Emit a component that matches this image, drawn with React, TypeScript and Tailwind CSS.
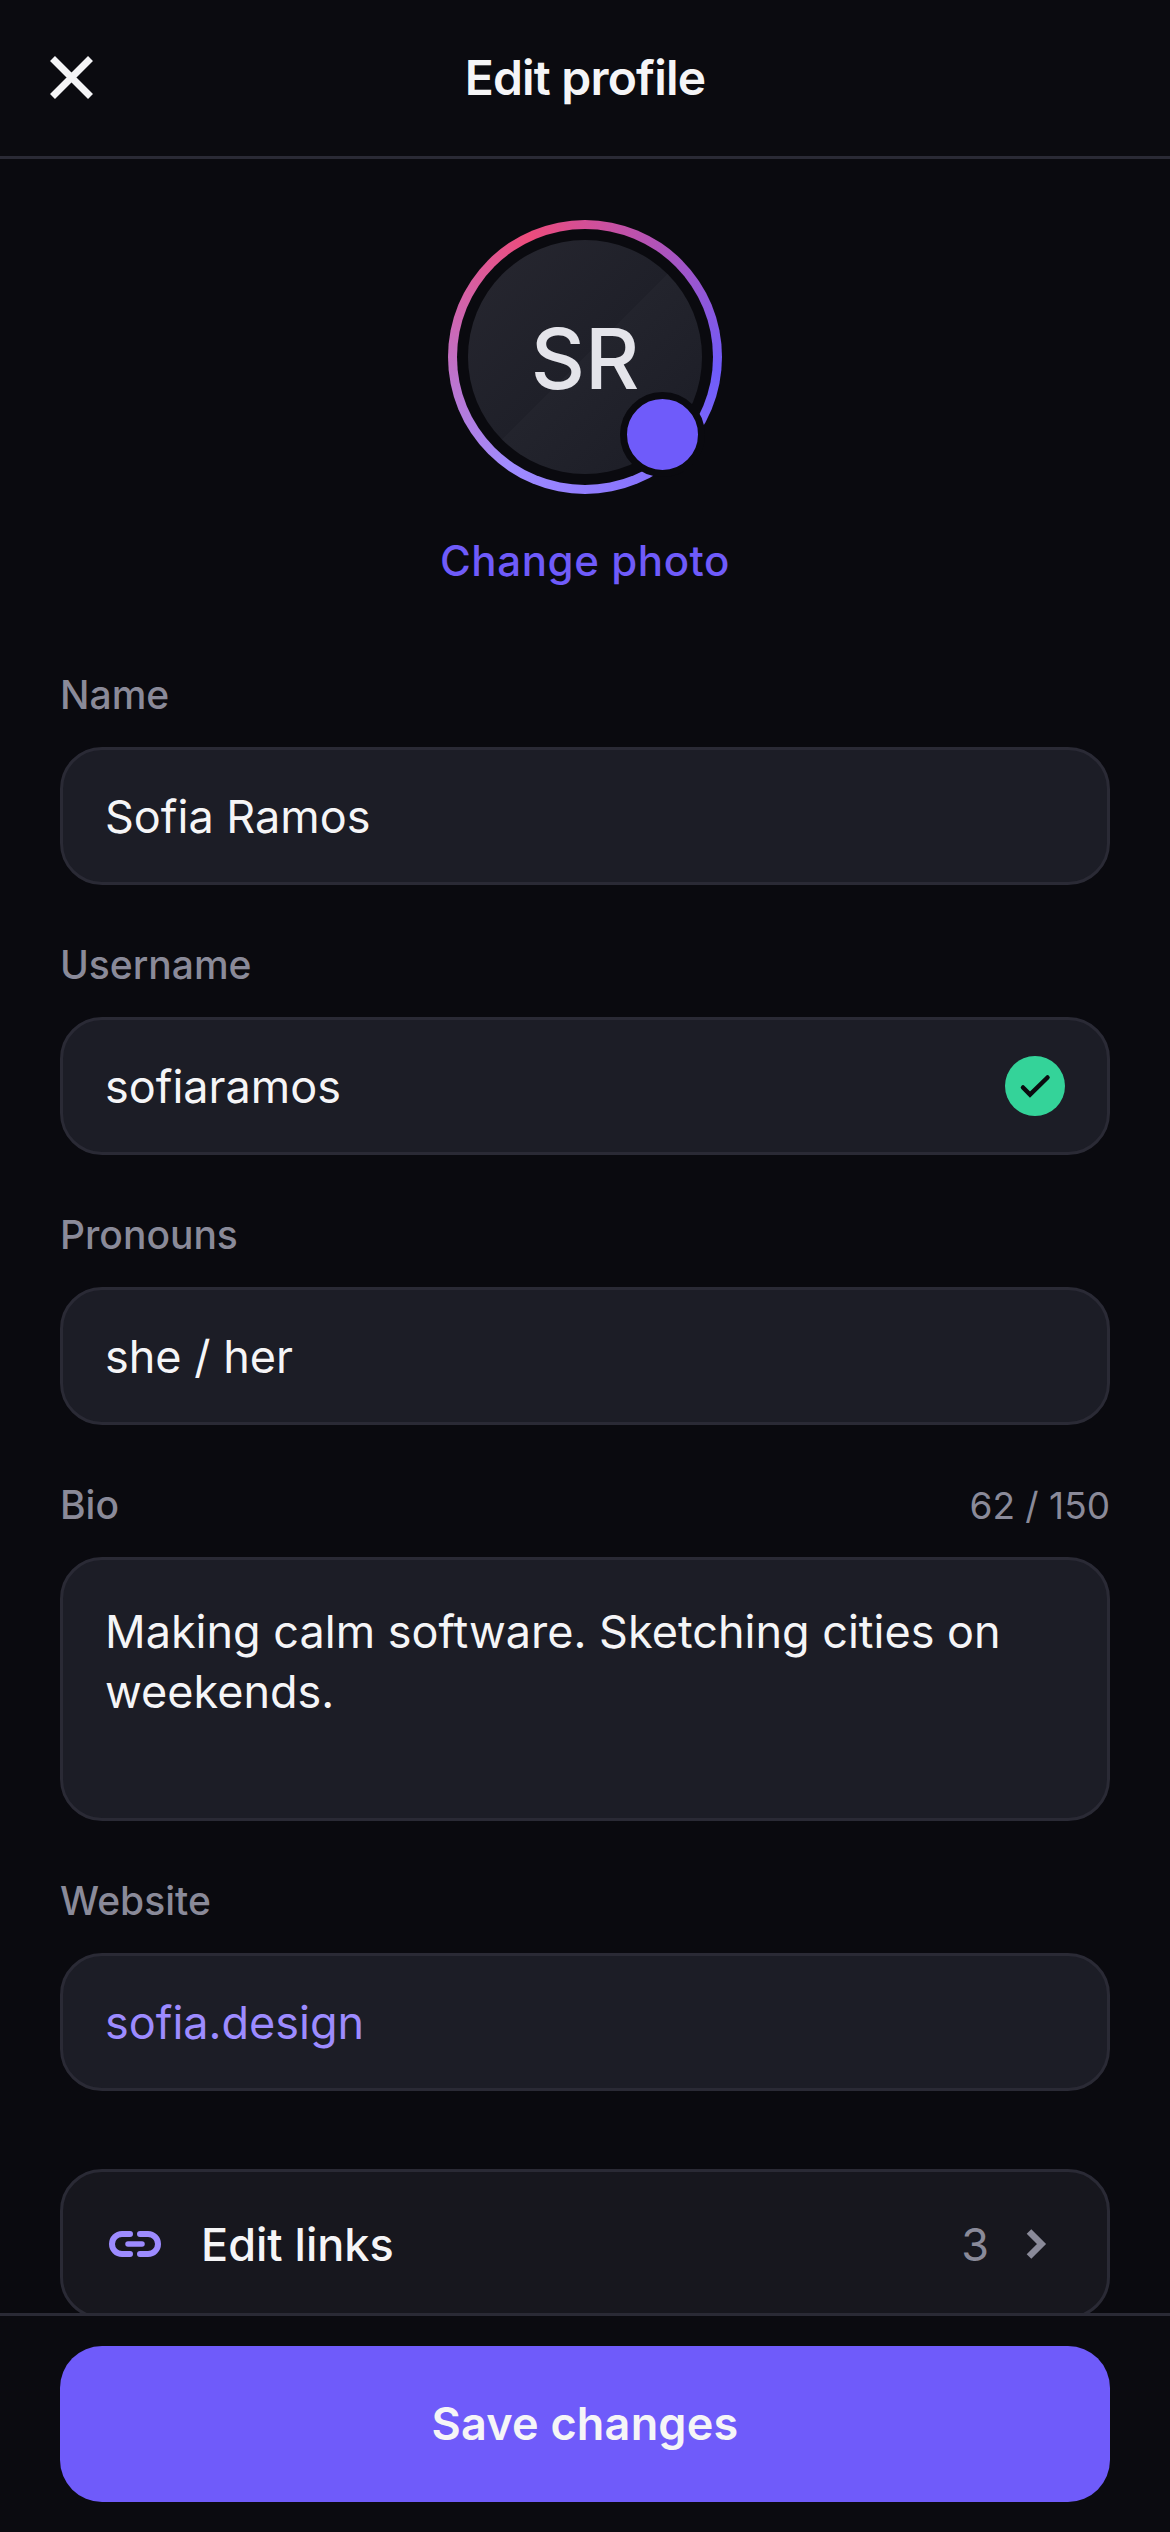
import React from "react";

function Field({ label, children, right }: { label: string; children: React.ReactNode; right?: string }) {
  return (
    <div className="flex flex-col gap-[28px]">
      <div className="flex h-[48px] items-center justify-between">
        <span className="text-[39px] leading-[48px] font-medium text-[#8a8a99]">{label}</span>
        {right && <span className="pt-[2px] text-[37px] leading-[48px] text-[#8a8a99]">{right}</span>}
      </div>
      {children}
    </div>
  );
}

function InputBox({ children, tone = "text-[#f5f5f7]" }: { children: React.ReactNode; tone?: string }) {
  return (
    <div className={`flex h-[138px] items-center justify-between rounded-[42px] border-[3px] border-[#2a2a35] bg-[#1c1d26] px-[42px] text-[45px] ${tone}`}>
      {children}
    </div>
  );
}

export default function App() {
  return (
    <div className="flex h-[2532px] w-[1170px] flex-col overflow-hidden bg-[#0a0a0f] font-['Inter',sans-serif]">
      <header className="relative flex h-[159px] shrink-0 items-center justify-center border-b-[3px] border-[#2a2a35] bg-[#0b0b10]">
        <button className="absolute top-[48px] left-[42px] h-[60px] w-[60px]" aria-label="Close">
          <svg viewBox="0 0 60 60" className="h-[60px] w-[60px]" fill="none" stroke="#f5f5f7" strokeWidth="7">
            <path d="M10.5 10.5 L48.5 48.5 M48.5 10.5 L10.5 48.5" />
          </svg>
        </button>
        <h1 className="text-[48px] font-semibold tracking-[-0.8px] text-[#f5f5f7]">Edit profile</h1>
      </header>

      <main className="min-h-0 flex-1 overflow-hidden px-[60px]">
        <div className="flex flex-col items-center pt-[61px]">
          <div className="relative h-[274px] w-[274px] rounded-full bg-[conic-gradient(from_335deg,#ee4c7c,#6f5bfa,#a08cff,#ee4c7c)] p-[9px]">
            <div className="h-full w-full rounded-full bg-[#0a0a0f] p-[11px]">
              <div className="flex h-full w-full items-center justify-center rounded-full bg-[linear-gradient(135deg,#272730_0%,#1f2029_50%,#23242d_50%,#1b1c25_100%)] pt-[4px] text-[84px] font-medium text-[#e4e4ea]">
                SR
              </div>
            </div>
            <div className="absolute right-[17px] bottom-[17px] h-[85px] w-[85px] rounded-full border-[7px] border-[#0a0a0f] bg-[#6f5bfa]" />
          </div>
          <div className="mt-[37px] text-[42px] leading-[60px] font-medium tracking-[0.6px] text-[#6f5bfa]">Change photo</div>
        </div>

        <div className="mt-[80px] flex flex-col gap-[56px]">
          <Field label="Name">
            <InputBox>
              <span className="pt-[2px]">Sofia Ramos</span>
            </InputBox>
          </Field>
          <Field label="Username">
            <InputBox>
              <span className="pt-[2px]">sofiaramos</span>
              <svg viewBox="0 0 60 60" className="h-[60px] w-[60px]" fill="none">
                <circle cx="30" cy="30" r="30" fill="#34d399" />
                <path d="M18 31.5 L25 38.5 L42.5 21.5" stroke="#0a0a0f" strokeWidth="4.5" strokeLinecap="round" />
              </svg>
            </InputBox>
          </Field>
          <Field label="Pronouns">
            <InputBox>
              <span className="pt-[2px]">she / her</span>
            </InputBox>
          </Field>
          <Field label="Bio" right="62 / 150">
            <div className="h-[264px] rounded-[42px] border-[3px] border-[#2a2a35] bg-[#1c1d26] px-[42px] pt-[42px] text-[45px] leading-[60px] text-[#f5f5f7]">
              Making calm software. Sketching cities on weekends.
            </div>
          </Field>
          <Field label="Website">
            <InputBox tone="text-[#9d8bff]">
              <span className="pt-[2px]">sofia.design</span>
            </InputBox>
          </Field>
        </div>

        <div className="mt-[78px] flex h-[150px] items-center rounded-[42px] border-[3px] border-[#2a2a35] bg-[#17171e] px-[42px]">
          <svg viewBox="0 0 60 60" className="h-[60px] w-[60px] shrink-0" fill="none" stroke="#9d8bff" strokeLinecap="round">
            <path d="M25 20 H17 A10 10 0 0 0 17 40 H25 M35 20 H43 A10 10 0 0 1 43 40 H35" strokeWidth="6" />
            <path d="M23 30 H37" strokeWidth="5.5" />
          </svg>
          <span className="ml-[36px] flex-1 pt-[2px] text-[45px] font-medium text-[#f5f5f7]">Edit links</span>
          <span className="pt-[2px] text-[45px] text-[#8a8a99]">3</span>
          <svg viewBox="0 0 60 60" className="ml-[16px] h-[60px] w-[60px] shrink-0" fill="none" stroke="#8a8a99" strokeWidth="6.5">
            <path d="M24 17.5 L36.5 30 L24 42.5" />
          </svg>
        </div>
      </main>

      <footer className="shrink-0 border-t-[3px] border-[#2a2a35] bg-[#0b0b10] px-[60px] py-[30px]">
        <button className="h-[156px] w-full rounded-[42px] bg-[#6f5bfa] text-[45px] font-semibold tracking-[0.2px] text-[#f5f5f7]">Save changes</button>
      </footer>
    </div>
  );
}
